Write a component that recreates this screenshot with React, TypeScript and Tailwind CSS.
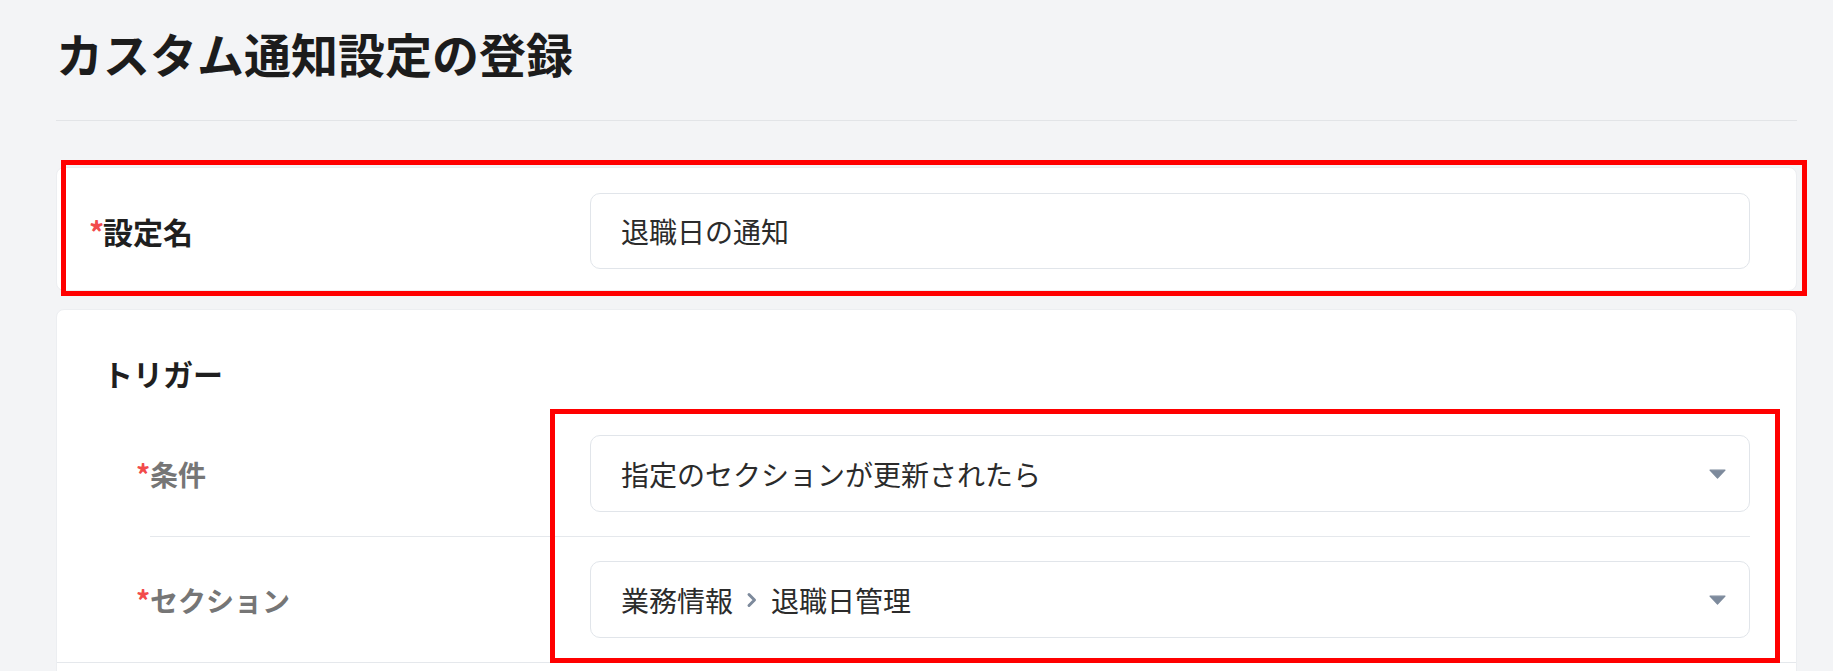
import React from 'react';

const font = "font-['Noto_Sans_CJK_JP','Noto_Sans',sans-serif]";

function Caret() {
  return (
    <svg width="17" height="10" viewBox="0 0 17 10" className="ml-auto shrink-0">
      <path d="M1 1.2 H16 L8.5 9 Z" fill="#7d8a9c" stroke="#7d8a9c" strokeWidth="1.2" strokeLinejoin="round" />
    </svg>
  );
}

function Crumb() {
  return (
    <svg width="12" height="18" viewBox="0 0 12 18" className="mx-[13px] shrink-0">
      <path d="M3 3.5 L8.5 9 L3 14.5" fill="none" stroke="#7d8a9c" strokeWidth="3" strokeLinecap="round" strokeLinejoin="round" />
    </svg>
  );
}

function Label({ text, gray }: { text: string; gray?: boolean }) {
  return (
    <div
      className={`flex-1 -ml-[14px] flex font-bold ${
        gray ? 'text-[28px] text-[#767676]' : 'text-[30px] text-[#1f1f1f]'
      }`}
    >
      <span className="w-[14px] text-[#f24b4b]">*</span>
      <span>{text}</span>
    </div>
  );
}

function Field({ children, select }: { children: React.ReactNode; select?: boolean }) {
  return (
    <div
      className={`w-[1160px] shrink-0 flex items-center rounded-[10px] border border-[#e1e5ea] bg-white pl-[30px] pr-[23px] text-[28px] text-[#2b2b2b] ${
        select ? 'h-[77px]' : 'h-[76px]'
      }`}
    >
      {children}
    </div>
  );
}

export default function App() {
  return (
    <div className={`min-h-screen bg-[#f3f4f6] pl-[56px] pr-[36px] pt-[18px] ${font}`}>
      <h1 className="text-[47px] font-bold leading-[69px] text-[#1c1c1c] pb-[33px] border-b border-[#e2e4e7]">
        カスタム通知設定の登録
      </h1>

      {/* 設定名 */}
      <div className="relative mt-[46px] rounded-lg border border-[#eceef1] bg-white pl-[46px] pr-[46px] pt-[25px] pb-[21px] flex items-center">
        <Label text="設定名" />
        <Field>退職日の通知</Field>
        <div className="absolute left-[4px] -top-[8px] w-[1746px] h-[136px] border-[5px] border-[#ff0000] pointer-events-none" />
      </div>

      {/* トリガー */}
      <div className="mt-[18px] rounded-lg border border-[#eceef1] bg-white">
        <div className="relative pt-[41px] px-[46px]">
          <h2 className="text-[30px] font-bold leading-[45px] text-[#1f1f1f] mb-[15px]">トリガー</h2>
          <div className="ml-[47px]">
            <div className="flex items-center py-6 border-b border-[#e5e8ec]">
              <Label text="条件" gray />
              <Field select>
                <span>指定のセクションが更新されたら</span>
                <Caret />
              </Field>
            </div>
            <div className="flex items-center py-6">
              <Label text="セクション" gray />
              <Field select>
                <span>業務情報</span>
                <Crumb />
                <span>退職日管理</span>
                <Caret />
              </Field>
            </div>
          </div>
          <div className="absolute left-[493px] top-[99px] w-[1230px] h-[254px] border-[5px] border-[#ff0000] pointer-events-none" />
        </div>
        <div className="border-t border-[#e5e8ec] h-[120px]" />
      </div>
    </div>
  );
}
